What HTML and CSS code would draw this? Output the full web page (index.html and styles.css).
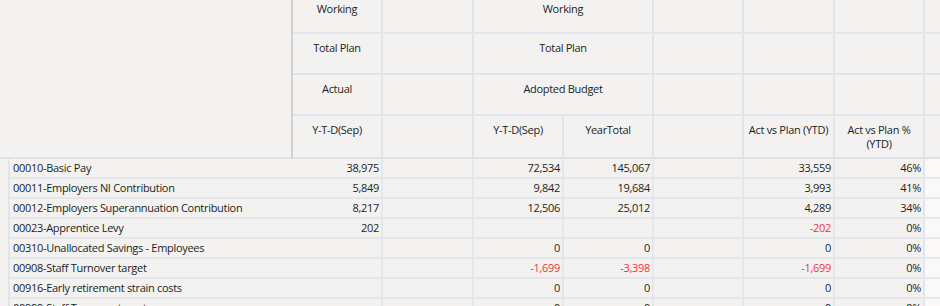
FILE: index.html
```html
<!DOCTYPE html>
<html>
<head>
<meta charset="utf-8">
<link rel="stylesheet" href="styles.css">
</head>
<body>
<div class="matrix">
  <div class="head">
    <div class="corner"></div>
    <div class="h r1 c3">Working</div>
    <div class="h r1 c4"></div>
    <div class="h r1 c5 span2">Working</div>
    <div class="h r1 c7"></div>
    <div class="h r1 c8"></div>
    <div class="h r1 c9"></div>
    <div class="h r1 c10 last"></div>

    <div class="h r2 c3">Total Plan</div>
    <div class="h r2 c4"></div>
    <div class="h r2 c5 span2">Total Plan</div>
    <div class="h r2 c7"></div>
    <div class="h r2 c8"></div>
    <div class="h r2 c9"></div>
    <div class="h r2 c10 last"></div>

    <div class="h r3 c3">Actual</div>
    <div class="h r3 c4"></div>
    <div class="h r3 c5 span2">Adopted Budget</div>
    <div class="h r3 c7"></div>
    <div class="h r3 c8"></div>
    <div class="h r3 c9"></div>
    <div class="h r3 c10 last"></div>

    <div class="h r4 c3">Y-T-D(Sep)</div>
    <div class="h r4 c4"></div>
    <div class="h r4 c5">Y-T-D(Sep)</div>
    <div class="h r4 c6">YearTotal</div>
    <div class="h r4 c7"></div>
    <div class="h r4 c8">Act vs Plan (YTD)</div>
    <div class="h r4 c9">Act vs Plan %<br>(YTD)</div>
    <div class="h r4 c10 last"></div>
  </div>

  <div class="body">
    <div class="row">
      <div class="stub"></div><div class="label">00010-Basic Pay</div>
      <div class="num act">38,975</div><div class="num"></div>
      <div class="num">72,534</div><div class="num">145,067</div><div class="num"></div>
      <div class="num">33,559</div><div class="num">46%</div><div class="tail"></div>
    </div>
    <div class="row">
      <div class="stub"></div><div class="label">00011-Employers NI Contribution</div>
      <div class="num act">5,849</div><div class="num"></div>
      <div class="num">9,842</div><div class="num">19,684</div><div class="num"></div>
      <div class="num">3,993</div><div class="num">41%</div><div class="tail"></div>
    </div>
    <div class="row">
      <div class="stub"></div><div class="label">00012-Employers Superannuation Contribution</div>
      <div class="num act">8,217</div><div class="num"></div>
      <div class="num">12,506</div><div class="num">25,012</div><div class="num"></div>
      <div class="num">4,289</div><div class="num">34%</div><div class="tail"></div>
    </div>
    <div class="row">
      <div class="stub"></div><div class="label">00023-Apprentice Levy</div>
      <div class="num act">202</div><div class="num"></div>
      <div class="num"></div><div class="num"></div><div class="num"></div>
      <div class="num neg">-202</div><div class="num">0%</div><div class="tail"></div>
    </div>
    <div class="row">
      <div class="stub"></div><div class="label">00310-Unallocated Savings - Employees</div>
      <div class="num act"></div><div class="num"></div>
      <div class="num">0</div><div class="num">0</div><div class="num"></div>
      <div class="num">0</div><div class="num">0%</div><div class="tail"></div>
    </div>
    <div class="row">
      <div class="stub"></div><div class="label">00908-Staff Turnover target</div>
      <div class="num act"></div><div class="num"></div>
      <div class="num neg">-1,699</div><div class="num neg">-3,398</div><div class="num"></div>
      <div class="num neg">-1,699</div><div class="num">0%</div><div class="tail"></div>
    </div>
    <div class="row">
      <div class="stub"></div><div class="label">00916-Early retirement strain costs</div>
      <div class="num act"></div><div class="num"></div>
      <div class="num">0</div><div class="num">0</div><div class="num"></div>
      <div class="num">0</div><div class="num">0%</div><div class="tail"></div>
    </div>
    <div class="row">
      <div class="stub"></div><div class="label">00999-Staff Turnover target</div>
      <div class="num act"></div><div class="num"></div>
      <div class="num">0</div><div class="num">0</div><div class="num"></div>
      <div class="num">0</div><div class="num">0%</div><div class="tail"></div>
    </div>
  </div>
</div>
</body>
</html>
```

FILE: styles.css
```css
html, body {
  margin: 0;
  padding: 0;
  background: #f3f2f1;
}
body {
  width: 940px;
  height: 306px;
  overflow: hidden;
  font-family: "Open Sans", "Noto Sans", sans-serif;
  font-size: 11px;
  letter-spacing: -0.3px;
  color: #201f1e;
}
.matrix {
  width: 940px;
}
.head {
  display: grid;
  grid-template-columns: 10px 283px 90px 91px 90px 90px 90px 91px 90px 15px;
  grid-template-rows: 34px 41px 41px 43px;
}
.corner {
  grid-column: 1 / 3;
  grid-row: 1 / 5;
  border-right: 2px solid #d3d1cf;
  border-bottom: 2px solid #dfe4ea;
}
.h {
  box-sizing: border-box;
  border-right: 2px solid #e1e5eb;
  border-bottom: 2px solid #e1e5eb;
  text-align: center;
  line-height: 14px;
  padding-top: 7px;
  white-space: nowrap;
}
.h.r1 { padding-top: 2px; }
.h.last { border-right: none; }
.h.r4 { border-bottom-color: #dde2e9; }
.span2 { grid-column: span 2; }
.body {
  display: flex;
  flex-direction: column;
}
.row {
  display: grid;
  grid-template-columns: 10px 283px 90px 91px 90px 90px 90px 91px 90px 15px;
  height: 20px;
}
.row > div {
  box-sizing: border-box;
  border-bottom: 2px solid #e3e7ec;
  line-height: 18px;
  white-space: nowrap;
  overflow: hidden;
}
.row > .stub {
  border-bottom: none;
  border-right: 2px solid #e1e5eb;
}
.label {
  padding-left: 3px;
}
.num {
  text-align: right;
  padding-right: 2px;
  border-right: 2px solid #e3e7ec;
}
.neg {
  color: #f2333b;
}
.tail {
  background: #faf9f8;
}
```
